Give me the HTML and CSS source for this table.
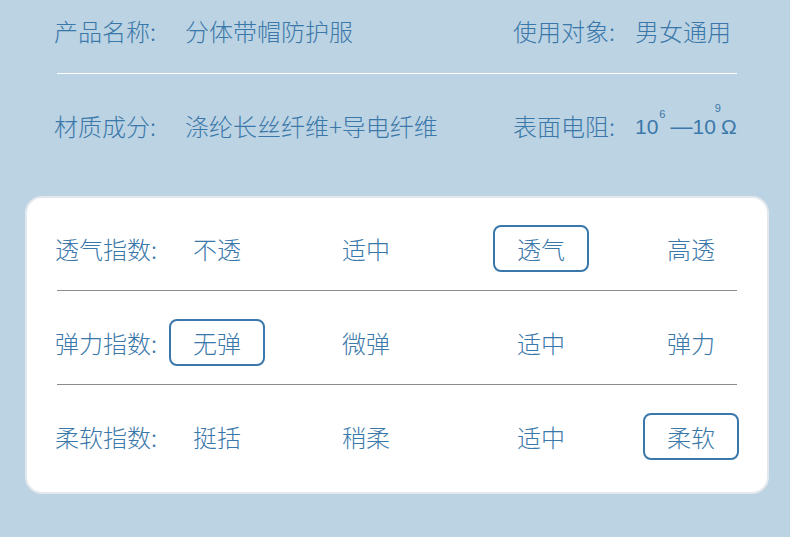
FILE: index.html
```html
<!DOCTYPE html>
<html lang="zh">
<head>
<meta charset="utf-8">
<title>产品参数</title>
<link rel="stylesheet" href="styles.css">
</head>
<body>
<div class="page">
  <section class="info">
    <div class="info-row first">
      <div class="pair"><span class="label">产品名称:</span><span class="value">分体带帽防护服</span></div>
      <div class="pair right"><span class="label">使用对象:</span><span class="value">男女通用</span></div>
    </div>
    <div class="white-line"></div>
    <div class="info-row second">
      <div class="pair"><span class="label">材质成分:</span><span class="value">涤纶长丝纤维+导电纤维</span></div>
      <div class="pair right"><span class="label">表面电阻:</span><span class="value num">10<sup class="exp exp6">6</sup><span class="dash">—</span>10<sup class="exp exp9">9</sup>Ω</span></div>
    </div>
  </section>
  <section class="card">
    <div class="opt-row first-row">
      <span class="opt-label">透气指数:</span>
      <span class="opt">不透</span>
      <span class="opt">适中</span>
      <span class="opt selected">透气</span>
      <span class="opt">高透</span>
    </div>
    <div class="grey-line"></div>
    <div class="opt-row">
      <span class="opt-label">弹力指数:</span>
      <span class="opt selected">无弹</span>
      <span class="opt">微弹</span>
      <span class="opt">适中</span>
      <span class="opt">弹力</span>
    </div>
    <div class="grey-line"></div>
    <div class="opt-row last-row">
      <span class="opt-label">柔软指数:</span>
      <span class="opt">挺括</span>
      <span class="opt">稍柔</span>
      <span class="opt">适中</span>
      <span class="opt selected">柔软</span>
    </div>
  </section>
</div>
</body>
</html>
```
FILE: styles.css
```css
html, body {
  margin: 0;
  padding: 0;
}
body {
  background: #bcd3e3;
  width: 790px;
  height: 537px;
  overflow: hidden;
  font-family: "Noto Sans CJK SC", "Noto Sans", sans-serif;
  font-weight: 300;
  color: #3b78aa;
  font-size: 24px;
}
.page {
  width: 790px;
  height: 537px;
}
.info {
  padding-left: 54px;
}
.info-row {
  display: grid;
  grid-template-columns: 459px auto;
  align-items: center;
}
.info-row.first {
  height: 61px;
}
.info-row.second {
  height: 102px;
  padding-bottom: 4px;
}
.pair {
  display: flex;
  align-items: center;
  white-space: nowrap;
}
.pair .label {
  width: 131px;
}
.pair.right .label {
  width: 122px;
}
.white-line {
  margin: 12px 0 0 3px;
  width: 680px;
  height: 1px;
  background: #ffffff;
}
.num {
  font-family: "Liberation Sans", "Noto Sans CJK SC", sans-serif;
  font-weight: 400;
  font-size: 21px;
  padding-top: 3px;
}
.dash {
  font-size: 22px;
}
.exp {
  font-size: 11px;
  position: relative;
  top: -5px;
  vertical-align: top;
  line-height: 1;
}
.exp6 {
  margin: 0 5px 0 1px;
}
.exp9 {
  margin: 0 0 0 -1px;
  top: -11px;
}
.card {
  margin: 16px 21px 0 25px;
  height: 294px;
  background: #ffffff;
  border: 2px solid #e2e8ec;
  border-radius: 17px;
}
.opt-row {
  display: grid;
  grid-template-columns: 114px 149px 175px 150px 96px;
  align-items: center;
  padding: 28px 0 18px 28px;
}
.opt-row.first-row {
  padding-top: 27px;
}
.opt-label {
  white-space: nowrap;
}
.opt {
  box-sizing: border-box;
  width: 96px;
  height: 47px;
  display: flex;
  align-items: center;
  justify-content: center;
  border: 2px solid transparent;
  border-radius: 8px;
}
.opt.selected {
  border-color: #3a78ab;
}
.grey-line {
  margin-left: 30px;
  width: 680px;
  height: 1px;
  background: #8c8c8c;
}
```
